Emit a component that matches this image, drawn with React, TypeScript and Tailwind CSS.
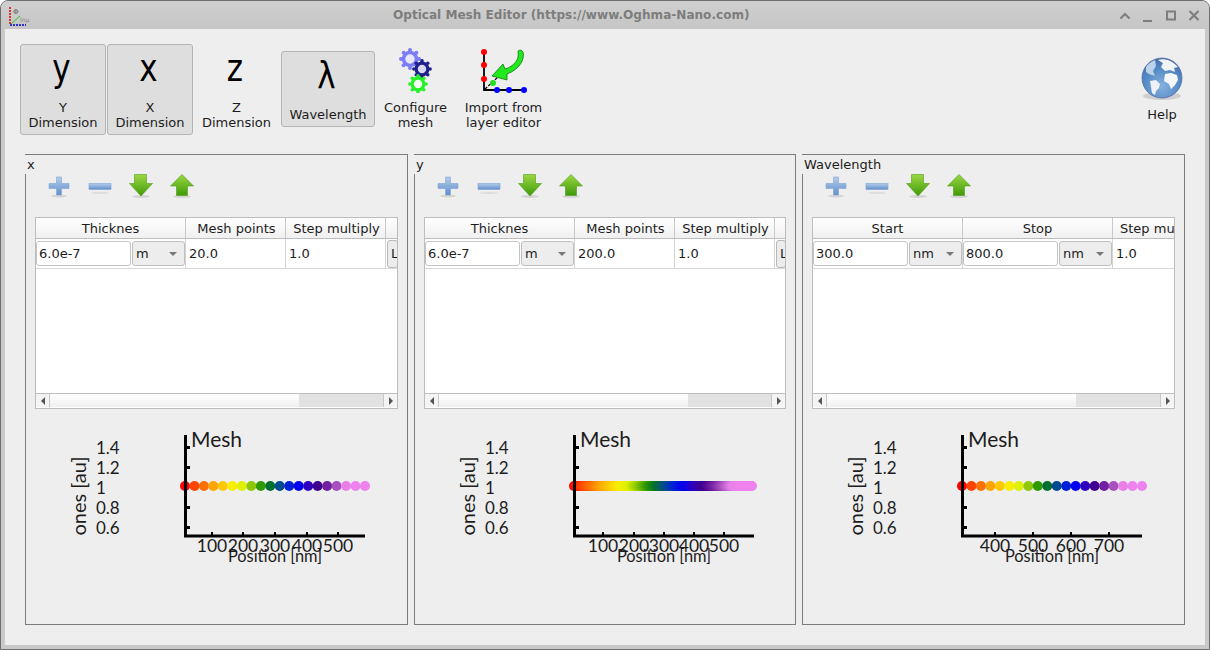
import { type ReactNode } from 'react';

const palette = [
  '#ff0000', '#ff4500', '#ff7000', '#ffa500', '#ffc800', '#f8ee00', '#dff000', '#8fc800', '#2f9a00', '#007030',
  '#004a90', '#0020d8', '#0000f0', '#3000c0', '#400090', '#7020a0', '#a850c0', '#e880e8', '#ee82ee', '#ee82ee',
];

const hex = (c: string) => [1, 3, 5].map((i) => parseInt(c.slice(i, i + 2), 16));

// blend along the palette for the dense 200 point mesh
const mix = (t: number) => {
  const p = t * (palette.length - 1);
  const i = Math.min(Math.floor(p), palette.length - 2);
  const a = hex(palette[i]);
  const b = hex(palette[i + 1]);
  const f = p - i;
  return `rgb(${a.map((v, k) => Math.round(v + (b[k] - v) * f)).join(',')})`;
};

const Plus = () => (
  <svg width="24" height="24" viewBox="0 0 24 24">
    <defs>
      <linearGradient id="blueV" x1="0" y1="0" x2="0" y2="1">
        <stop offset="0" stopColor="#b4cdec" />
        <stop offset="1" stopColor="#5f8fcb" />
      </linearGradient>
    </defs>
    <ellipse cx="12" cy="22" rx="8" ry="1.5" fill="#d4d4d4" />
    <path d="M9.500 3h5v6.500H22v5h-7.500V21h-5v-6.500H2v-5h7.500z" fill="url(#blueV)" stroke="#7fa3d3" strokeWidth="0.6" />
  </svg>
);

const Minus = () => (
  <svg width="24" height="24" viewBox="0 0 24 24">
    <ellipse cx="12" cy="19" rx="9" ry="1" fill="#dcdcdc" />
    <rect x="1" y="9.500" width="22" height="6" fill="url(#blueV)" stroke="#7fa3d3" strokeWidth="0.6" />
  </svg>
);

const Arrow = ({ up }: { up?: boolean }) => (
  <svg width="24" height="24" viewBox="0 0 24 24">
    <defs>
      <linearGradient id="greenV" x1="0" y1="0" x2="0" y2="1">
        <stop offset="0" stopColor="#9bd843" />
        <stop offset="1" stopColor="#3f9a08" />
      </linearGradient>
    </defs>
    <ellipse cx="12" cy="22.500" rx="9" ry="1.400" fill="#d2d2d2" />
    {up ? (
      <path d="M12 0.500 23.500 12H17.500V21.500H6.500V12H0.500z" fill="url(#greenV)" stroke="#4f9a1a" strokeWidth="0.6" />
    ) : (
      <path d="M5.500 0.500H17.500V9.500H23.500L12 22 0.500 9.500H5.500z" fill="url(#greenV)" stroke="#4f9a1a" strokeWidth="0.6" />
    )}
  </svg>
);

const Gear = ({ cx, cy, r, color, hole }: { cx: number; cy: number; r: number; color: string; hole: string }) => (
  <g>
    {Array.from({ length: 8 }, (_, i) => {
      const a = (i * Math.PI) / 4;
      return <circle key={i} cx={cx + Math.cos(a) * r * 0.9} cy={cy + Math.sin(a) * r * 0.9} r={r * 0.2} fill={color} />;
    })}
    <circle cx={cx} cy={cy} r={r * 0.65} fill={hole} stroke={color} strokeWidth={r * 0.36} />
  </g>
);

const Gears = () => (
  <svg width="44" height="46" viewBox="0 0 44 46" className="-mt-[5px]">
    <Gear cx={16} cy={12} r={10} color="#7d7df5" hole="#e8e8fb" />
    <Gear cx={28} cy={22} r={9} color="#20208c" hole="#d8d8ee" />
    <Gear cx={24} cy={37} r={9} color="#26f026" hole="#f2fff2" />
  </svg>
);

const ImportIcon = () => (
  <svg width="56" height="48" viewBox="0 0 56 48" className="-mt-[2px]">
    <path d="M8 5V43H48" fill="none" stroke="#000" strokeWidth="1.800" />
    <circle cx="8" cy="5" r="3" fill="#f00" />
    <circle cx="8" cy="18" r="3" fill="#f00" />
    <circle cx="8" cy="32" r="3" fill="#f00" />
    <circle cx="21" cy="43" r="3" fill="#00f" />
    <circle cx="33" cy="43" r="3" fill="#00f" />
    <circle cx="48" cy="43" r="3" fill="#00f" />
    <path d="M9 42 22 30" stroke="#000" strokeWidth="1.200" strokeDasharray="3 1.500" />
    <circle cx="17" cy="36" r="3" fill="#22dd22" />
    <path
      d="M42 4C44 2.500 46 3 47 5 49 12 44 22 31 27L31 33 16 29 27 17 29 22C36 20 41 15 42 10 42.500 8 42 6 42 4z"
      fill="#22e81e"
      stroke="#0a7a0a"
      strokeWidth="0.8"
    />
  </svg>
);

const Globe = () => (
  <svg width="44" height="46" viewBox="0 0 44 46">
    <defs>
      <radialGradient id="sea" cx="0.5" cy="0.7" r="0.7">
        <stop offset="0" stopColor="#86b2de" />
        <stop offset="0.7" stopColor="#4f86c2" />
        <stop offset="1" stopColor="#4a6aa8" />
      </radialGradient>
    </defs>
    <ellipse cx="22" cy="39" rx="19" ry="4" fill="#cfcfcf" />
    <circle cx="22" cy="21" r="20" fill="url(#sea)" stroke="#5e6ea4" strokeWidth="0.8" />
    <path d="M6 10C9 6 12 4 15 3L16 9 13 14 15 19 9 17 6 15z" fill="#bcd2ea" />
    <path d="M18 3C25 0.500 33 4 38 10L34 11 35 15 30 13 25 14 21 10 23 6z" fill="#f2f5f8" />
    <path d="M10 24 16 23 20 27 19 31 16 34 15 38 12 36 11 30z" fill="#eef1f5" />
    <path d="M25 17 31 16 37 18 38 23 35 28 31 32 29 27 24 24z" fill="#f6f7f9" />
  </svg>
);

const AppLogo = () => (
  <svg width="26" height="24" viewBox="0 0 26 24">
    <path d="M6 4V22" stroke="#e00000" strokeWidth="1.500" strokeDasharray="2 1" />
    <path d="M6 22H22" stroke="#0000d8" strokeWidth="1.500" strokeDasharray="2 1" />
    <path d="M7 21 16 13" stroke="#22cc22" strokeWidth="1" />
    <text x="9" y="11" fontSize="7" fill="#666" fontFamily="'DejaVu Sans', sans-serif">Φ</text>
    <text x="16" y="19" fontSize="6" fill="#888" fontFamily="'DejaVu Sans', sans-serif">lnμ</text>
  </svg>
);

const ToolButton = ({
  w,
  h,
  checked,
  icon,
  children,
}: {
  w: string;
  h: string;
  checked?: boolean;
  icon: ReactNode;
  children: ReactNode;
}) => (
  <div
    className={`${w} ${h} flex shrink-0 flex-col items-center justify-end rounded-[3px] border pb-[3px] text-center text-[13px] leading-[15px] ${
      checked ? 'border-[#b4b4b4] bg-[#dedede]' : 'border-transparent'
    }`}
  >
    <div className="flex flex-1 items-center justify-center">{icon}</div>
    <div className="pb-[1px]">{children}</div>
  </div>
);

const Glyph = ({ children }: { children: string }) => (
  <span className="-ml-[3px] -mt-[8px] inline-block scale-y-[1.2] text-[31px] leading-[40px] text-black">{children}</span>
);

const Input = ({ value }: { value: string }) => (
  <div className="flex h-[25px] w-[95px] shrink-0 items-center rounded-[3px] border border-[#c4c4c4] bg-white pl-[2px]">
    {value}
  </div>
);

const Combo = ({ value }: { value: string }) => (
  <div className="flex h-[25px] flex-1 items-center justify-between rounded-[3px] border border-[#c0c0c0] bg-[#ededed] pl-[3px] pr-[7px]">
    <span>{value}</span>
    <span className="h-0 w-0 border-x-[4px] border-t-[4px] border-x-transparent border-t-[#777]" />
  </div>
);

const Cell = ({ w, children, last }: { w: string; children: ReactNode; last?: boolean }) => (
  <div className={`${w} flex shrink-0 items-center gap-px overflow-hidden ${last ? '' : 'border-r border-[#d4d4d4]'}`}>
    {children}
  </div>
);

const HeaderCell = ({ w, children }: { w: string; children?: ReactNode }) => (
  <div className={`${w} flex shrink-0 items-center justify-center whitespace-nowrap border-r border-[#c8c8c8] pt-px`}>
    {children}
  </div>
);

const ScrollBar = ({ thumb }: { thumb: string }) => (
  <div className="flex h-[14px] border-t border-[#bdbdbd] bg-[#f4f4f4]">
    <div className="flex w-[14px] items-center justify-center border-r border-[#c8c8c8] bg-[#f4f4f4]">
      <span className="h-0 w-0 border-y-[4px] border-r-[4px] border-y-transparent border-r-[#555]" />
    </div>
    <div className={`${thumb} bg-gradient-to-b from-white to-[#f0f0f0]`} />
    <div className="flex-1 bg-[#e2e2e2]" />
    <div className="flex w-[14px] items-center justify-center border-l border-[#c8c8c8] bg-[#f4f4f4]">
      <span className="h-0 w-0 border-y-[4px] border-l-[4px] border-y-transparent border-l-[#555]" />
    </div>
  </div>
);

const MeshPlot = ({ points, ticks, labels }: { points: number; ticks: number[]; labels: string[] }) => {
  const font = "Lato, 'Liberation Sans', sans-serif";
  const dots = Array.from({ length: points }, (_, i) => i / (points - 1));
  const span = points > 50 ? 178 : 180;
  return (
    <svg width="381" height="150" viewBox="0 0 381 150" className="mt-[20px] block" fontFamily={font} fill="#1c1c1c">
      {dots.map((t) => (
        <circle key={t} cx={159 + t * span} cy={57} r={5} fill={points > 50 ? mix(t) : palette[Math.round(t * 19)]} />
      ))}
      <path d="M159.500 6V107H339" fill="none" stroke="#000" strokeWidth="3" />
      {[17, 37, 77, 97].map((y) => (
        <rect key={y} x={159} y={y} width={5} height={3} fill="#000" />
      ))}
      {ticks.map((x) => (
        <rect key={x} x={x - 1} y={103} width={2} height={3} fill="#000" />
      ))}
      <text x={165} y={18} fontSize={21}>Mesh</text>
      {['1.4', '1.2', '1', '0.8', '0.6'].map((l, i) => (
        <text key={l} x={70} y={25 + i * 20} fontSize={17}>{l}</text>
      ))}
      <text transform="translate(60 67) rotate(-90)" textAnchor="middle" fontSize={20}>ones [au]</text>
      {ticks.map((x, i) => (
        <text key={x} x={x} y={123} textAnchor="middle" fontSize={17.500}>{labels[i]}</text>
      ))}
      <text x={249} y={133} textAnchor="middle" fontSize={16.400}>Position [nm]</text>
    </svg>
  );
};

const Panel = ({
  title,
  w,
  head,
  row,
  thumb,
  children,
}: {
  title: string;
  w: string;
  head: ReactNode;
  row: ReactNode;
  thumb: string;
  children: ReactNode;
}) => (
  <section className={`${w} h-[471px] shrink-0 border border-[#7c7c7c]`}>
    <div className="-ml-px h-[19px] w-fit bg-[#eeeeee] pl-[2px] pr-[2px] leading-[20px]">{title}</div>
    <div className="flex h-[24px] gap-[17px] pl-[21px]">
      <Plus />
      <Minus />
      <Arrow />
      <Arrow up />
    </div>
    <div className="mx-[9px] mt-[19px] h-[192px] border border-[#bdbdbd] bg-white">
      <div className="flex h-[21px] overflow-hidden border-b border-[#bdbdbd] bg-gradient-to-b from-white to-[#f0f0f0]">
        {head}
      </div>
      <div className="flex h-[30px] border-b border-[#d8d8d8]">{row}</div>
      <div className="h-[124px]" />
      <ScrollBar thumb={thumb} />
    </div>
    {children}
  </section>
);

const LayerRow = ({ points }: { points: string }) => (
  <>
    <Cell w="w-[150px]">
      <Input value="6.0e-7" />
      <Combo value="m" />
    </Cell>
    <Cell w="w-[100px]">
      <span className="pl-[3px]">{points}</span>
    </Cell>
    <Cell w="w-[100px]">
      <span className="pl-[3px]">1.0</span>
    </Cell>
    <Cell w="flex-1" last>
      <div className="ml-px flex h-[28px] w-full items-center rounded-[3px] border border-[#b8b8b8] bg-[#ececec] pl-[3px]">L</div>
    </Cell>
  </>
);

const LayerHead = () => (
  <>
    <HeaderCell w="w-[150px]">Thicknes</HeaderCell>
    <HeaderCell w="w-[100px] pl-[2px]">Mesh points</HeaderCell>
    <HeaderCell w="w-[100px] pl-[2px]">Step multiply</HeaderCell>
  </>
);

export default function App() {
  return (
    <div
      className="flex h-[650px] w-[1210px] flex-col overflow-hidden rounded-t-[8px] border border-[#6e6e6e] bg-[#c9c9c9] text-[13px] text-[#1c1c1c]"
      style={{ fontFamily: "'DejaVu Sans', sans-serif" }}
    >
      <header className="flex h-[28px] shrink-0 items-center bg-gradient-to-b from-[#cfcfcf] to-[#c6c6c6] pl-[3px] pr-[7px]">
        <AppLogo />
        <div className="ml-[363px] text-[12.070px] font-bold text-[#7d7d7d]">Optical Mesh Editor (https://www.Oghma-Nano.com)</div>
        <div className="ml-auto mt-[2px] flex items-center gap-[7px]">
          <svg width="16" height="16" viewBox="0 0 16 16"><path d="M3.500 10.500 8 6l4.500 4.500" fill="none" stroke="#7f7f7f" strokeWidth="2.200" /></svg>
          <svg width="16" height="16" viewBox="0 0 16 16"><path d="M3 13H12" stroke="#7f7f7f" strokeWidth="2.200" /></svg>
          <svg width="16" height="16" viewBox="0 0 16 16"><rect x="4" y="3.500" width="8" height="8" fill="none" stroke="#7f7f7f" strokeWidth="2" /></svg>
          <svg width="16" height="16" viewBox="0 0 16 16"><path d="M3.500 3 12.500 12M12.500 3 3.500 12" stroke="#7f7f7f" strokeWidth="2.200" /></svg>
        </div>
      </header>
      <main className="mx-[4px] mb-[4px] flex flex-1 flex-col bg-[#eeeeee] pl-[15px] pt-[15px]">
        <div className="flex h-[90px] items-center">
          <ToolButton w="w-[86px]" h="h-[91px]" checked icon={<Glyph>y</Glyph>}>Y<br />Dimension</ToolButton>
          <div className="ml-px" />
          <ToolButton w="w-[86px]" h="h-[91px]" checked icon={<Glyph>x</Glyph>}>X<br />Dimension</ToolButton>
          <div className="ml-px" />
          <ToolButton w="w-[85px]" h="h-[91px]" icon={<Glyph>z</Glyph>}>Z<br />Dimension</ToolButton>
          <div className="ml-[2px]" />
          <ToolButton w="w-[94px]" h="h-[76px]" checked icon={<Glyph>λ</Glyph>}>Wavelength</ToolButton>
          <ToolButton w="w-[81px]" h="h-[91px]" icon={<Gears />}>Configure<br />mesh</ToolButton>
          <ToolButton w="w-[95px]" h="h-[91px]" icon={<ImportIcon />}>Import from<br />layer editor</ToolButton>
          <div className="ml-[588px]" />
          <ToolButton w="w-[46px]" h="h-[76px]" icon={<Globe />}>Help</ToolButton>
        </div>
        <div className="ml-[5px] mt-[20px] flex gap-[6px]">
          <Panel title="x" w="w-[383px]" head={<LayerHead />} row={<LayerRow points="20.0" />} thumb="w-[249px]">
            <MeshPlot points={20} ticks={[186, 217, 249, 281, 312]} labels={['100', '200', '300', '400', '500']} />
          </Panel>
          <Panel title="y" w="w-[382px]" head={<LayerHead />} row={<LayerRow points="200.0" />} thumb="w-[249px]">
            <MeshPlot points={200} ticks={[188, 219, 249, 279, 309]} labels={['100', '200', '300', '400', '500']} />
          </Panel>
          <Panel
            title="Wavelength"
            w="w-[383px]"
            head={
              <>
                <HeaderCell w="w-[150px]">Start</HeaderCell>
                <HeaderCell w="w-[150px]">Stop</HeaderCell>
                <div className="flex-1 overflow-hidden whitespace-nowrap pl-[7px] pt-px leading-[20px]">Step multiply</div>
              </>
            }
            row={
              <>
                <Cell w="w-[150px]">
                  <Input value="300.0" />
                  <Combo value="nm" />
                </Cell>
                <Cell w="w-[150px]">
                  <Input value="800.0" />
                  <Combo value="nm" />
                </Cell>
                <Cell w="flex-1" last>
                  <span className="pl-[3px]">1.0</span>
                </Cell>
              </>
            }
            thumb="w-[249px]"
          >
            <MeshPlot points={20} ticks={[192, 230, 268, 306]} labels={['400', '500', '600', '700']} />
          </Panel>
        </div>
      </main>
    </div>
  );
}
